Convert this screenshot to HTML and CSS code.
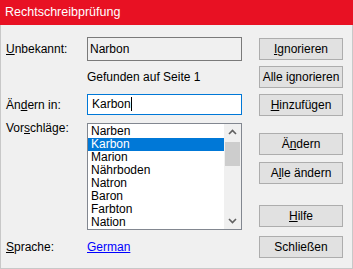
FILE: index.html
```html
<!DOCTYPE html>
<html lang="de">
<head>
  <meta charset="UTF-8" />
  <title>Rechtschreibprüfung</title>
  <link rel="stylesheet" href="styles.css">
</head>
<body>

  <div class="window">
    <div class="title-bar">Rechtschreibprüfung</div>

    <div class="dialog">
      <!-- row 1 -->
      <label class="label"><u>U</u>nbekannt:</label>
      <div class="field readonly">Narbon</div>
      <button class="btn"><u>I</u>gnorieren</button>

      <!-- row 2 -->
      <div></div>
      <div class="found">Gefunden auf Seite 1</div>
      <button class="btn">Alle i<u>g</u>norieren</button>

      <!-- row 3 -->
      <label class="label">Än<u>d</u>ern in:</label>
      <div class="field input">Karbon<span class="caret"></span></div>
      <button class="btn"><u>H</u>inzufügen</button>

      <!-- row 4 -->
      <label class="label top">Vor<u>s</u>chläge:</label>
      <div class="listbox">
        <ul class="items">
          <li>Narben</li>
          <li class="selected">Karbon</li>
          <li>Marion</li>
          <li>Nährboden</li>
          <li>Natron</li>
          <li>Baron</li>
          <li>Farbton</li>
          <li>Nation</li>
        </ul>
        <div class="scrollbar">
          <svg class="arrow" width="17" height="17" viewBox="0 0 17 17"><path d="M5 10 L8.5 6.5 L12 10" fill="none" stroke="#606060" stroke-width="1.6"/></svg>
          <div class="thumb"></div>
          <div class="track"></div>
          <svg class="arrow" width="17" height="17" viewBox="0 0 17 17"><path d="M5 7 L8.5 10.5 L12 7" fill="none" stroke="#606060" stroke-width="1.6"/></svg>
        </div>
      </div>
      <div class="btn-stack">
        <button class="btn">Ä<u>n</u>dern</button>
        <button class="btn">A<u>l</u>le ändern</button>
        <button class="btn help"><u>H</u>ilfe</button>
      </div>

      <!-- row 5 -->
      <label class="label lang-label"><u>S</u>prache:</label>
      <a class="lang" href="#">German</a>
      <button class="btn close">Schließen</button>
    </div>
  </div>

</body>
</html>
```

FILE: styles.css
```css
:root {
  --face: #f0f0f0;
  --red: #e81123;
  --accent: #0078d7;
  --btn: #e1e1e1;
  --btn-border: #adadad;
  --field-border: #7a7a7a;
}

* {
  margin: 0;
  padding: 0;
  box-sizing: border-box;
}

body {
  font-family: 'Liberation Sans', Arial, sans-serif;
  font-size: 12px;
  color: #000;
  background: var(--face);
}

.window {
  width: 353px;
  height: 269px;
  background: var(--face);
  border: 1px solid #c8c8c8;
  border-top: none;
}

.title-bar {
  height: 25px;
  margin: 0 -1px;
  padding: 0 5px;
  background: var(--red);
  color: #fff;
  font-size: 12.5px;
  line-height: 25px;
}

.dialog {
  display: grid;
  grid-template-columns: 81px 172px 84px;
  grid-template-rows: 28px 28px 27px 113px auto;
  align-items: start;
  padding: 12px 0 0 5px;
}

.label {
  line-height: 24px;
  white-space: nowrap;
}

.label.top {
  margin-top: 1px;
  line-height: 14px;
}

u {
  text-decoration: underline;
  text-underline-offset: 1px;
}

.field {
  width: 155px;
  height: 24px;
  line-height: 22px;
  border: 1px solid var(--field-border);
  padding-left: 2px;
  white-space: nowrap;
}

.field.input {
  height: 21px;
  margin-top: 1px;
  line-height: 19px;
  padding-left: 4px;
  background: #fff;
  border-color: var(--accent);
}

.caret {
  display: inline-block;
  width: 1px;
  height: 14px;
  background: #000;
  vertical-align: -3px;
}

.found {
  margin-top: 5px;
  line-height: 14px;
  white-space: nowrap;
}

.btn {
  width: 84px;
  height: 22px;
  margin-top: 1px;
  padding: 0;
  background: var(--btn);
  border: 1px solid var(--btn-border);
  font: inherit;
  color: #000;
  line-height: 18px;
  white-space: nowrap;
}

.listbox {
  display: flex;
  width: 155px;
  height: 107px;
  margin-top: 3px;
  border: 1px solid #828790;
  background: #fff;
}

.items {
  flex: 1;
  list-style: none;
  padding-top: 1px;
}

.items li {
  height: 13px;
  line-height: 13px;
  padding-left: 3px;
}

.items li.selected {
  background: var(--accent);
  color: #fff;
}

.scrollbar {
  display: flex;
  flex-direction: column;
  width: 17px;
  background: var(--face);
}

.arrow {
  display: block;
  flex: none;
}

.thumb {
  height: 24px;
  margin: 1px 1px 0;
  background: #cdcdcd;
}

.track {
  flex: 1;
}

.btn-stack {
  display: flex;
  flex-direction: column;
  gap: 7px;
  margin-top: 13px;
}

.btn-stack .btn {
  margin-top: 0;
}

.btn-stack .help {
  margin-top: 14px;
}

.lang-label {
  margin-top: 2px;
}

.lang {
  line-height: 24px;
  margin-top: 2px;
  color: #0000ff;
}

.btn.close {
  margin-top: 3px;
}
```
